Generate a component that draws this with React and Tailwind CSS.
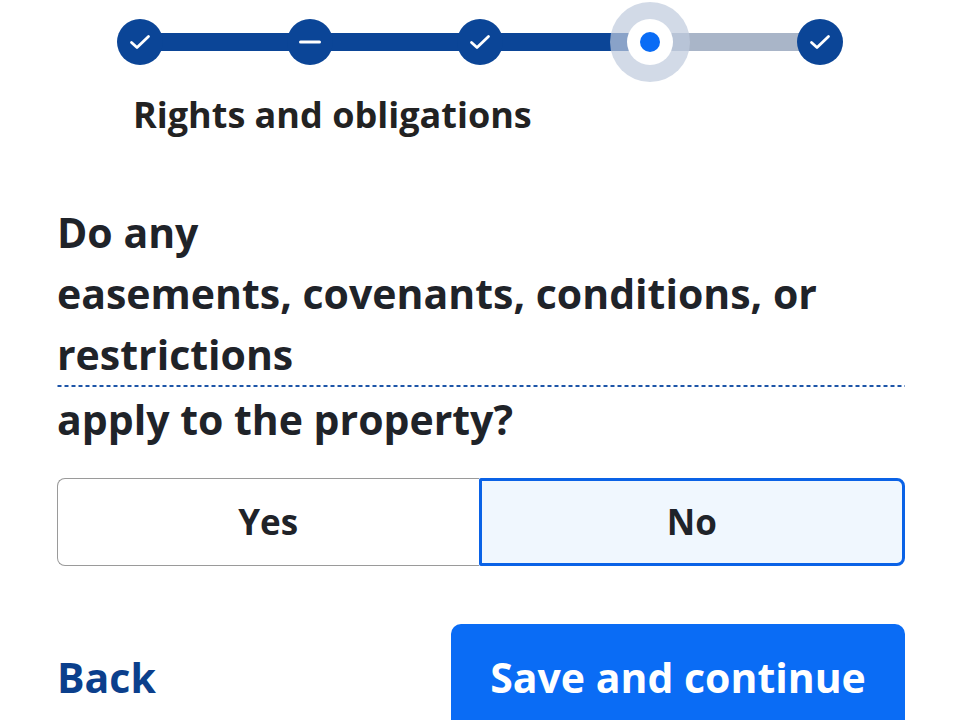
import React, { useState } from 'react';

const Check = () => (
  <svg width="24" height="24" viewBox="0 0 24 24" fill="none">
    <path d="M3.5 12.5 L9 17.5 L20.5 6.5" stroke="white" strokeWidth="2.8" strokeLinecap="round" strokeLinejoin="round" />
  </svg>
);

const Dash = () => (
  <svg width="24" height="24" viewBox="0 0 24 24" fill="none">
    <path d="M2.5 12 H21.5" stroke="white" strokeWidth="3" strokeLinecap="round" />
  </svg>
);

const DoneStep = ({ children }) => (
  <div className="w-[46px] h-[46px] rounded-full bg-[#0b4597] flex items-center justify-center shrink-0 z-10">
    {children}
  </div>
);

const App = () => {
  const [answer, setAnswer] = useState('no');

  return (
    <div className="w-[960px] h-[720px] overflow-hidden bg-white font-['Open_Sans',sans-serif] text-[#1f2329]">
      {/* Stepper */}
      <div className="relative h-[84px] ml-[117px] w-[726px] flex items-center">
        <div className="absolute left-[23px] top-[33px] h-[18px] w-[510px] bg-[#0b4597]" />
        <div className="absolute left-[533px] top-[33px] h-[18px] w-[170px] bg-[#a9b5c8]" />
        <div className="relative flex items-center justify-between w-full">
          <DoneStep><Check /></DoneStep>
          <DoneStep><Dash /></DoneStep>
          <DoneStep><Check /></DoneStep>
          <div className="relative w-[46px] h-[46px] shrink-0 flex items-center justify-center">
            <div className="absolute -inset-[17px] rounded-full bg-[#bfcbdd] opacity-70" />
            <div className="relative w-[46px] h-[46px] rounded-full bg-white flex items-center justify-center">
              <div className="w-[20px] h-[20px] rounded-full bg-[#0a6cf5]" />
            </div>
          </div>
          <DoneStep><Check /></DoneStep>
        </div>
      </div>

      <div className="pl-[133px] mt-[9px] text-[36px] font-bold leading-[44px] text-[#222]">
        Rights and obligations
      </div>

      <div className="pl-[57px] pr-[55px] mt-[65px]">
        <h1 className="text-[41px] font-bold leading-[61px]">
          <span className="block">Do any</span>
          <span className="block pb-[2px] bg-[linear-gradient(to_right,#1d55a8_4px,transparent_4px)] bg-[length:7px_2px] bg-repeat-x bg-bottom">
            easements, covenants, conditions, or restrictions
          </span>
          <span className="block mt-[2px]">apply to the property?</span>
        </h1>

        <div className="mt-[28px] flex h-[88px]">
          <button
            onClick={() => setAnswer('yes')}
            className={`flex-1 rounded-l-[8px] text-[35px] font-bold ${
              answer === 'yes'
                ? 'bg-[#f0f7fe] border-[3px] border-[#0a62e6] rounded-r-[2px]'
                : 'bg-white border border-[#9a9a9a] border-r-0'
            }`}
          >
            Yes
          </button>
          <button
            onClick={() => setAnswer('no')}
            className={`flex-1 rounded-r-[8px] text-[35px] font-bold ${
              answer === 'no'
                ? 'bg-[#f0f7fe] border-[3px] border-[#0a62e6] rounded-l-[2px]'
                : 'bg-white border border-[#9a9a9a] border-l-0'
            }`}
          >
            No
          </button>
        </div>

        <div className="mt-[58px] flex items-start justify-between">
          <a href="#" className="mt-[31px] text-[41px] font-bold text-[#0b3f8c] leading-[44px]">
            Back
          </a>
          <button className="w-[454px] h-[120px] rounded-[10px] bg-[#0a6cf5] text-white text-[41px] font-bold flex justify-center pt-[31px] leading-[44px]">
            Save and continue
          </button>
        </div>
      </div>
    </div>
  );
};

export default App;
